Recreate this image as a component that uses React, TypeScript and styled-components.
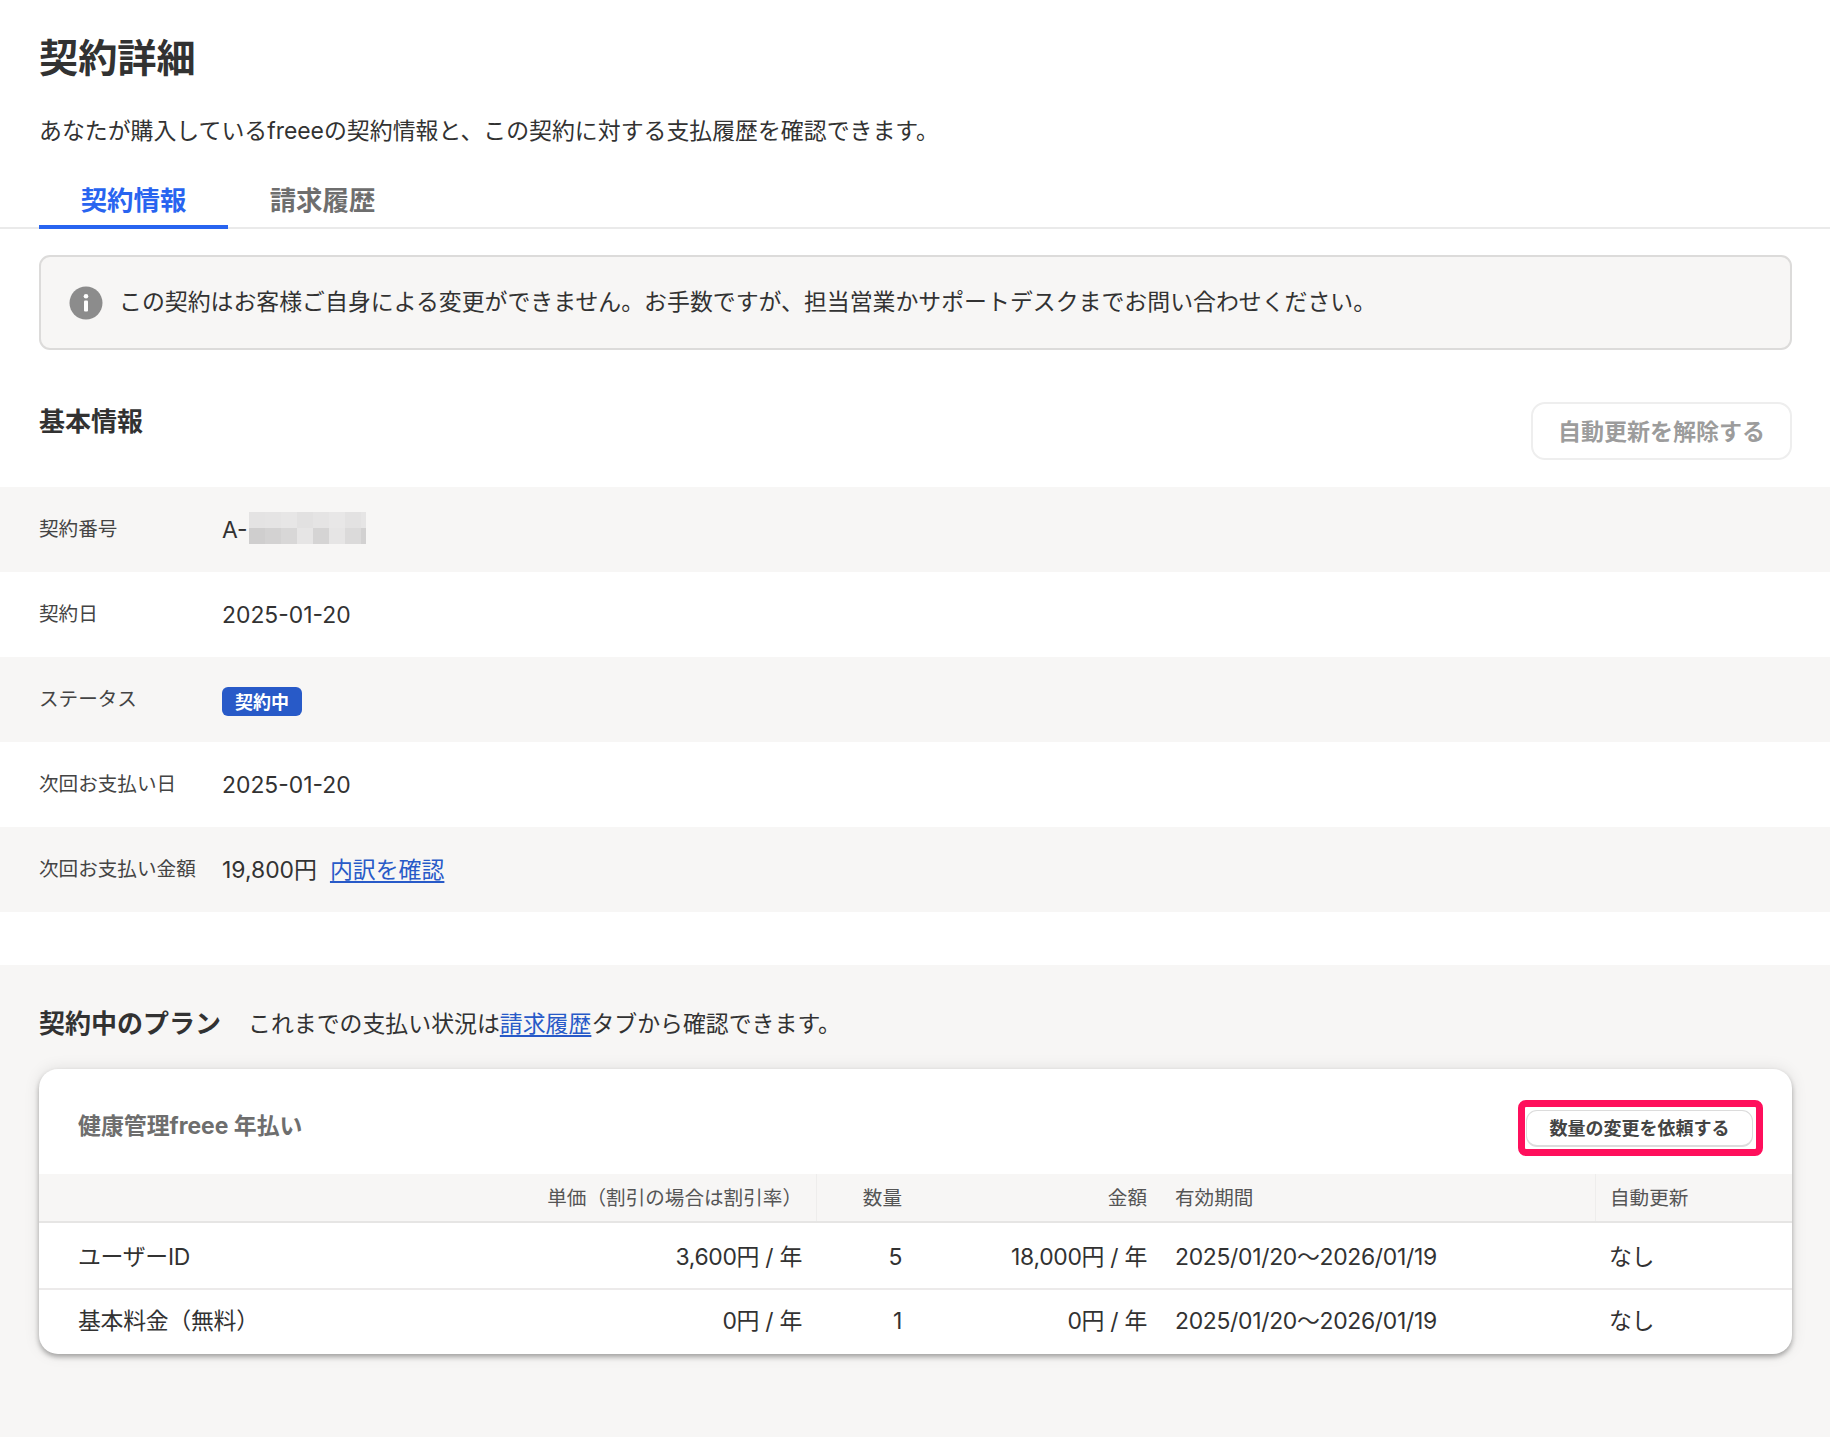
import React from 'react'
import styled, { createGlobalStyle } from 'styled-components'

const FONT = '"Inter", "Noto Sans CJK JP", "Noto Sans", sans-serif'

const GlobalStyle = createGlobalStyle`
  html, body { margin: 0; padding: 0; background: #fff; }
  body {
    font-family: ${FONT};
    line-height: 1.4;
    color: #323232;
  }
  * { box-sizing: border-box; }
`

const Page = styled.div`
  width: 1830px;
  min-height: 1437px;
  display: flex;
  flex-direction: column;
`

const Header = styled.header`
  padding: 28px 39px 0;
`

const Title = styled.h1`
  margin: 0;
  font-size: 39.2px;
  line-height: 60px;
  font-weight: 700;
  color: #323232;
`

const Lead = styled.p`
  margin: 23px 0 0;
  font-size: 22.9px;
  line-height: 40px;
`

const TabBar = styled.nav`
  display: flex;
  height: 60px;
  margin-top: 18px;
  padding: 0 39px;
  border-bottom: 2px solid #eaeaea;
`

const Tab = styled.a<{ $active?: boolean }>`
  width: 189px;
  height: 60px;
  padding-top: 6px;
  display: flex;
  align-items: center;
  justify-content: center;
  font-size: 26.4px;
  font-weight: 700;
  color: ${(p) => (p.$active ? '#2864f0' : '#6e6e6e')};
  border-bottom: 4px solid ${(p) => (p.$active ? '#2864f0' : 'transparent')};
`

const Alert = styled.div`
  display: flex;
  align-items: center;
  gap: 16px;
  height: 95px;
  margin: 26px 38px 0 39px;
  padding: 0 28px;
  background: #f7f6f5;
  border: 2px solid #dcdbda;
  border-radius: 11px;
  font-size: 22.9px;
`

const SectionHead = styled.div`
  display: flex;
  justify-content: space-between;
  height: 137px;
  padding: 52px 38px 0 39px;
`

const SectionTitle = styled.h2`
  margin: 1px 0 0;
  font-size: 26px;
  line-height: 38px;
  font-weight: 700;
`

const GhostButton = styled.button`
  width: 261px;
  height: 58px;
  padding: 2px 0 0;
  background: #fff;
  border: 2px solid #eeeeee;
  border-radius: 14px;
  color: #9c9c9c;
  font: 700 23px/1.4 ${FONT};
`

const InfoRow = styled.div`
  display: flex;
  align-items: center;
  height: 85px;
  padding-left: 39px;
  &:nth-child(odd) { background: #f7f6f5; }
`

const InfoLabel = styled.div`
  width: 183px;
  flex: none;
  font-size: 19.6px;
  color: #444;
`

const InfoValue = styled.div`
  display: flex;
  align-items: center;
  gap: 13px;
  padding-top: 2px;
  font-size: 22.9px;
  color: #323232;
`

const Masked = styled.div`
  display: flex;
  align-items: center;
  height: 32px;
`

const Mosaic = styled.div`
  display: grid;
  grid-template-columns: repeat(7, 16px) 5px;
  grid-template-rows: 16px 16px;
  margin: 0 0 5px 1px;
`

const Tile = styled.i<{ $c: string }>`
  display: block;
  background: ${(p) => p.$c};
`

const Badge = styled.span`
  display: inline-flex;
  align-items: center;
  justify-content: center;
  width: 80px;
  height: 29px;
  margin-top: 2px;
  padding-top: 2px;
  background: #285ac8;
  border-radius: 6px;
  color: #fff;
  font-size: 18px;
  font-weight: 700;
`

const Link = styled.a`
  color: #285ac8;
  text-decoration: underline;
  text-underline-offset: 3px;
`

const PlanSection = styled.section`
  flex: 1;
  margin-top: 53px;
  padding: 36px 38px 60px 39px;
  background: #f7f6f5;
`

const PlanHead = styled.div`
  display: flex;
  align-items: center;
  gap: 27px;
  height: 44px;
  font-size: 22.9px;
`

const PlanNote = styled.span`
  padding-top: 2px;
`

const Card = styled.div`
  margin-top: 24px;
  background: #fff;
  border-radius: 19px;
  overflow: hidden;
  box-shadow: 0 3px 5px rgba(0, 0, 0, 0.3), 0 0 16px rgba(0, 0, 0, 0.1);
`

const CardHead = styled.div`
  display: flex;
  justify-content: space-between;
  height: 105px;
  padding: 31px 29px 0 39px;
`

const CardTitle = styled.div`
  font-size: 22.9px;
  line-height: 50px;
  margin-top: 1px;
  font-weight: 700;
  color: #6e6e6e;
`

const Highlight = styled.div`
  display: flex;
  width: 245px;
  height: 56px;
  padding: 3px 3px 2px 1px;
  border: 7px solid #ff0f5c;
  border-radius: 8px;
`

const SmallButton = styled.button`
  flex: 1;
  background: #fff;
  border: 1px solid #dcdcdc;
  border-bottom-width: 2px;
  border-radius: 11px;
  color: #444;
  font: 700 18px/1.4 ${FONT};
  padding: 2px 0 0;
`

const COLUMNS = '777px 100px 245px 434px 1fr'

const HeadRow = styled.div`
  display: grid;
  grid-template-columns: ${COLUMNS};
  height: 49px;
  background: #f7f6f5;
  border-bottom: 2px solid #e6e5e4;
  padding-top: 0;
  font-size: 19.6px;
  color: #555;
`

const BodyRow = styled.div`
  display: grid;
  grid-template-columns: ${COLUMNS};
  height: 65px;
  padding-top: 3px;
  font-size: 22.9px;
  letter-spacing: -0.3px;
  color: #323232;
  & + & { border-top: 2px solid #eceaea; height: 66px; padding: 0 0 1px; }
`

const Cell = styled.div<{ $right?: boolean; $split?: boolean }>`
  display: flex;
  align-items: center;
  justify-content: ${(p) => (p.$right ? 'flex-end' : 'flex-start')};
  padding: 0 14px;
  white-space: nowrap;
  ${(p) => (p.$split ? 'border-left: 1px solid #eeedec;' : '')}
`

const HeadCell = styled(Cell)`
  padding-top: 3px;
`

const NameCell = styled(Cell)`
  justify-content: space-between;
  padding-left: 39px;
`

function InfoIcon() {
  return (
    <svg width="34" height="34" viewBox="0 0 34 34" style={{ flex: 'none' }}>
      <circle cx="17" cy="17" r="16.5" fill="#8c8c8c" />
      <circle cx="17" cy="10.2" r="2.3" fill="#fff" />
      <rect x="15" y="14.5" width="4" height="11" rx="1" fill="#fff" />
    </svg>
  )
}

const mosaic = [
  '#e4e3e3', '#e5e4e4', '#e7e6e6', '#e2e1e1', '#e5e4e4', '#e8e7e7', '#e3e2e2', '#e6e5e5',
  '#cfcece', '#d3d2d2', '#d8d7d7', '#e6e5e5', '#d5d4d4', '#e6e5e5', '#dbdada', '#d2d1d1',
]

const plans = [
  { name: 'ユーザーID', price: '3,600円 / 年', qty: '5', amount: '18,000円 / 年' },
  { name: '基本料金（無料）', price: '0円 / 年', qty: '1', amount: '0円 / 年' },
]

export default function App() {
  return (
    <Page>
      <GlobalStyle />
      <Header>
        <Title>契約詳細</Title>
        <Lead>あなたが購入しているfreeeの契約情報と、この契約に対する支払履歴を確認できます。</Lead>
      </Header>
      <TabBar>
        <Tab $active>契約情報</Tab>
        <Tab>請求履歴</Tab>
      </TabBar>
      <Alert>
        <InfoIcon />
        この契約はお客様ご自身による変更ができません。お手数ですが、担当営業かサポートデスクまでお問い合わせください。
      </Alert>
      <SectionHead>
        <SectionTitle>基本情報</SectionTitle>
        <GhostButton disabled>自動更新を解除する</GhostButton>
      </SectionHead>
      <div>
        <InfoRow>
          <InfoLabel>契約番号</InfoLabel>
          <InfoValue>
            <Masked>
              A-
              <Mosaic>
                {mosaic.map((c, i) => (
                  <Tile key={i} $c={c} />
                ))}
              </Mosaic>
            </Masked>
          </InfoValue>
        </InfoRow>
        <InfoRow>
          <InfoLabel>契約日</InfoLabel>
          <InfoValue>2025-01-20</InfoValue>
        </InfoRow>
        <InfoRow>
          <InfoLabel>ステータス</InfoLabel>
          <InfoValue>
            <Badge>契約中</Badge>
          </InfoValue>
        </InfoRow>
        <InfoRow>
          <InfoLabel>次回お支払い日</InfoLabel>
          <InfoValue>2025-01-20</InfoValue>
        </InfoRow>
        <InfoRow>
          <InfoLabel>次回お支払い金額</InfoLabel>
          <InfoValue>
            19,800円 <Link>内訳を確認</Link>
          </InfoValue>
        </InfoRow>
      </div>
      <PlanSection>
        <PlanHead>
          <SectionTitle>契約中のプラン</SectionTitle>
          <PlanNote>
            これまでの支払い状況は<Link>請求履歴</Link>タブから確認できます。
          </PlanNote>
        </PlanHead>
        <Card>
          <CardHead>
            <CardTitle>健康管理freee 年払い</CardTitle>
            <Highlight>
              <SmallButton>数量の変更を依頼する</SmallButton>
            </Highlight>
          </CardHead>
          <HeadRow>
            <HeadCell $right>単価（割引の場合は割引率）</HeadCell>
            <HeadCell $right $split>数量</HeadCell>
            <HeadCell $right>金額</HeadCell>
            <HeadCell>有効期間</HeadCell>
            <HeadCell $split>自動更新</HeadCell>
          </HeadRow>
          {plans.map((p) => (
            <BodyRow key={p.name}>
              <NameCell>
                <span>{p.name}</span>
                <span>{p.price}</span>
              </NameCell>
              <Cell $right>{p.qty}</Cell>
              <Cell $right>{p.amount}</Cell>
              <Cell>2025/01/20〜2026/01/19</Cell>
              <Cell>なし</Cell>
            </BodyRow>
          ))}
        </Card>
      </PlanSection>
    </Page>
  )
}
